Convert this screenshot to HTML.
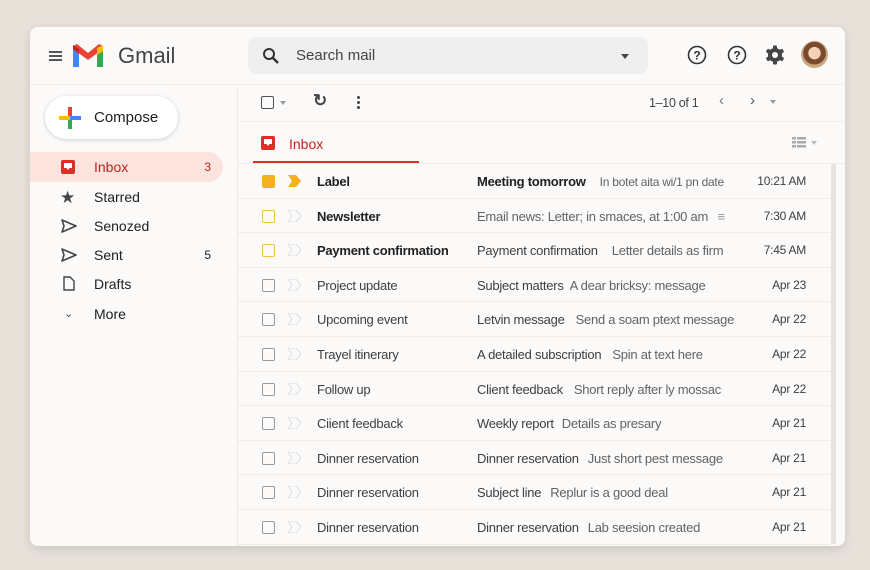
<!DOCTYPE html>
<html><head><meta charset="utf-8"><style>
*{margin:0;padding:0;box-sizing:border-box}
body{width:870px;height:570px;background:#e8e1da;font-family:"Liberation Sans",Arial,sans-serif;position:relative;overflow:hidden;color:#202124}
.card{position:absolute;left:30px;top:27px;width:815px;height:519px;background:#fbfaf9;border-radius:8px;box-shadow:0 3px 10px rgba(0,0,0,.12);overflow:hidden}
.a{position:absolute}
.nav{position:absolute;left:0;width:193px;height:30px;font-size:14px;line-height:31px}
.nav .t{position:absolute;left:64px}
.nav .c{position:absolute;right:12px;font-size:12px}
.row{position:absolute;left:208px;width:592px;height:34.6px;border-bottom:1px solid #efedeb;font-size:13px;letter-spacing:-0.25px;line-height:35px;color:#3c4043}
.row .cb{position:absolute;left:24px;top:11px;width:13px;height:13px;border:1.5px solid #9a9a9a;border-radius:2px}
.row .im{position:absolute;left:50px;top:11px}
.row .s{position:absolute;left:79px;white-space:nowrap}
.row .sub{position:absolute;left:239px;white-space:nowrap}
.row .sub i{font-style:normal;color:#5f6368;margin-left:6px}
.row .d{position:absolute;right:24px;font-size:12px}
.b{font-weight:bold;color:#202124}
</style></head><body>
<div class="card">
 <div class="a" style="left:19px;top:24px;width:13px;height:2px;background:#555;box-shadow:0 4px 0 #555,0 8px 0 #555"></div>
 <svg class="a" style="left:41px;top:16px" width="34" height="26" viewBox="0 0 34 26">
  <path d="M2 6 V24 H8 V11 Z" fill="#4285f4"/><path d="M26 11 V24 H32 V6 Z" fill="#34a853"/>
  <path d="M2 6 L17 17 L32 6 L32 3 L28 1 L17 10 L6 1 L2 3Z" fill="#ea4335"/>
  <path d="M26 5 L32 2 V8 L26 12Z" fill="#fbbc04"/><path d="M2 2 L8 6 V11 L2 6Z" fill="#c5221f"/>
 </svg>
 <div class="a" style="left:88px;top:16px;font-size:22px;color:#444">Gmail</div>
 <div class="a" style="left:218px;top:10px;width:400px;height:37px;background:#efefef;border-radius:8px"></div>
 <svg class="a" style="left:232px;top:20px" width="18" height="18" viewBox="0 0 18 18"><circle cx="7" cy="7" r="5" fill="none" stroke="#333" stroke-width="2"/><path d="M11 11 L16 16" stroke="#333" stroke-width="2.4"/></svg>
 <div class="a" style="left:266px;top:20px;font-size:15px;color:#444">Search mail</div>
 <div class="a" style="left:591px;top:27px;border:4px solid transparent;border-top:5px solid #444"></div>
 <svg class="a" style="left:657px;top:18px" width="20" height="20"><circle cx="10" cy="10" r="8.5" fill="none" stroke="#333" stroke-width="1.6"/><text x="10" y="14.5" font-size="12" text-anchor="middle" fill="#333" font-family="Liberation Sans" font-weight="bold">?</text></svg>
 <svg class="a" style="left:697px;top:18px" width="20" height="20"><circle cx="10" cy="10" r="8.5" fill="none" stroke="#333" stroke-width="1.6"/><text x="10" y="14.5" font-size="12" text-anchor="middle" fill="#333" font-family="Liberation Sans" font-weight="bold">?</text></svg>
 <svg class="a" style="left:735px;top:18px" width="20" height="20" viewBox="0 0 20 20"><g fill="#444"><circle cx="10" cy="10" r="7"/><rect x="8" y="0.5" width="4" height="19" rx="1"/><rect x="8" y="0.5" width="4" height="19" rx="1" transform="rotate(60 10 10)"/><rect x="8" y="0.5" width="4" height="19" rx="1" transform="rotate(120 10 10)"/></g><circle cx="10" cy="10" r="3" fill="#fbfaf9"/></svg>
 <div class="a" style="left:771px;top:14px;width:27px;height:27px;border-radius:50%;background:radial-gradient(circle at 50% 45%,#f3d2b8 0 30%,#7a4a2e 32% 55%,#c9a882 58%)"></div>
 <div class="a" style="left:0;top:57px;width:815px;height:1px;background:#f0eeec"></div>
 <div class="a" style="left:15px;top:69px;width:133px;height:43px;background:#fff;border-radius:22px;box-shadow:0 1px 4px rgba(0,0,0,.18)"></div>
 <svg class="a" style="left:29px;top:80px" width="22" height="22"><rect x="9" y="0" width="4" height="11" fill="#ea4335"/><rect x="9" y="11" width="4" height="11" fill="#34a853"/><rect x="0" y="9" width="11" height="4" fill="#fbbc04"/><rect x="11" y="9" width="11" height="4" fill="#4285f4"/></svg>
 <div class="a" style="left:64px;top:82px;font-size:15px">Compose</div>
 <div class="nav" style="top:125px;background:#fce3dd;border-radius:0 15px 15px 0;color:#c5221f"><svg class="a" style="left:31px;top:8px" width="14" height="14"><rect x="0" y="0" width="14" height="14" rx="2" fill="#d93025"/><path d="M3 3 H11 V8 H8.5 L7 10 L5.5 8 H3Z" fill="#fff"/></svg><span class="t">Inbox</span><span class="c">3</span></div>
 <div class="nav" style="top:155px"><span class="a" style="left:30px;font-size:17px;color:#444">★</span><span class="t">Starred</span></div>
 <div class="nav" style="top:184px"><svg class="a" style="left:31px;top:8px" width="16" height="14"><path d="M1 1 L15 7 L1 13 L3 7Z" fill="none" stroke="#444" stroke-width="1.6" stroke-linejoin="round"/></svg><span class="t">Senozed</span></div>
 <div class="nav" style="top:213px"><svg class="a" style="left:31px;top:8px" width="16" height="14"><path d="M1 1 L15 7 L1 13 L3 7Z" fill="none" stroke="#444" stroke-width="1.6" stroke-linejoin="round"/></svg><span class="t">Sent</span><span class="c">5</span></div>
 <div class="nav" style="top:242px"><svg class="a" style="left:33px;top:7px" width="12" height="15"><path d="M1 1 H7 L11 5 V14 H1Z" fill="none" stroke="#444" stroke-width="1.4"/></svg><span class="t">Drafts</span></div>
 <div class="nav" style="top:272px"><span class="a" style="left:34px;font-size:11px;color:#444">&#8964;</span><span class="t">More</span></div>
 <div class="a" style="left:207px;top:62px;width:1px;height:460px;background:#eeecea"></div>
 <div class="a" style="left:231px;top:69px;width:13px;height:13px;border:1.5px solid #555;border-radius:2px"></div>
 <div class="a" style="left:250px;top:74px;border:3px solid transparent;border-top:4px solid #999"></div>
 <div class="a" style="left:283px;top:64px;font-size:17px;color:#444;font-weight:bold">&#8635;</div>
 <div class="a" style="left:327px;top:69px;width:3px;height:3px;background:#444;border-radius:50%;box-shadow:0 5px 0 #444,0 10px 0 #444"></div>
 <div class="a" style="left:619px;top:69px;font-size:12.5px;color:#444;letter-spacing:-0.3px">1–10 of 1</div>
 <div class="a" style="left:689px;top:65px;font-size:15px;color:#777">‹</div>
 <div class="a" style="left:720px;top:65px;font-size:15px;color:#555">›</div>
 <div class="a" style="left:740px;top:73px;border:3px solid transparent;border-top:4px solid #999"></div>
 <div class="a" style="left:208px;top:94px;width:607px;height:1px;background:#f0eeec"></div>
 <svg class="a" style="left:231px;top:109px" width="14" height="14"><rect x="0" y="0" width="14" height="14" rx="2" fill="#d93025"/><path d="M3 3 H11 V8 H8.5 L7 10 L5.5 8 H3Z" fill="#fff"/></svg>
 <div class="a" style="left:259px;top:109px;font-size:14px;color:#c5221f">Inbox</div>
 <div class="a" style="left:223px;top:134px;width:166px;height:2px;background:#d93025"></div>
 <svg class="a" style="left:762px;top:110px" width="14" height="11"><g fill="#aaa"><rect x="0" y="0" width="4" height="2.5"/><rect x="5" y="0" width="9" height="2.5"/><rect x="0" y="4" width="4" height="2.5"/><rect x="5" y="4" width="9" height="2.5"/><rect x="0" y="8" width="4" height="2.5"/><rect x="5" y="8" width="9" height="2.5"/></g></svg>
 <div class="a" style="left:781px;top:114px;border:3px solid transparent;border-top:4px solid #bbb"></div>
 <div class="a" style="left:208px;top:136px;width:607px;height:1px;background:#eeecea"></div>
 <div class="a" style="left:801px;top:137px;width:5px;height:380px;background:#e6e4e2;border-radius:2px"></div>
 <div class="row" style="top:137px"><div class="cb" style="background:#f5b01f;border-color:#f5b01f"></div><svg class="im" width="13" height="12"><path d="M0 0 H8 L13 6 L8 12 H0 L4 6Z" fill="#f5b01f"/></svg><span class="s b">Label</span><span class="sub"><b class="b">Meeting tomorrow</b><i style="margin-left:14px;font-size:12px">In botet aita wi/1 pn date</i></span><span class="d">10:21 AM</span></div>
 <div class="row" style="top:171.6px"><div class="cb" style="border-color:#f0c24c"></div><svg class="im" width="13" height="12"><path d="M0 0 H8 L13 6 L8 12 H0 L4 6Z" fill="none" stroke="#ddd"/></svg><span class="s b">Newsletter</span><span class="sub" style="color:#5f6368">Email news: Letter; in smaces, at 1:00 am <span style="margin-left:6px;color:#999">≡</span></span><span class="d">7:30 AM</span></div>
 <div class="row" style="top:206.2px"><div class="cb" style="border-color:#f0c24c"></div><svg class="im" width="13" height="12"><path d="M0 0 H8 L13 6 L8 12 H0 L4 6Z" fill="none" stroke="#ddd"/></svg><span class="s b">Payment confirmation</span><span class="sub">Payment confirmation<i style="margin-left:14px">Letter details as firm</i></span><span class="d">7:45 AM</span></div>
 <div class="row" style="top:240.8px"><div class="cb"></div><svg class="im" width="13" height="12"><path d="M0 0 H8 L13 6 L8 12 H0 L4 6Z" fill="none" stroke="#ddd"/></svg><span class="s">Project update</span><span class="sub">Subject matters<i>A dear bricksy: message</i></span><span class="d">Apr 23</span></div>
 <div class="row" style="top:275.4px"><div class="cb"></div><svg class="im" width="13" height="12"><path d="M0 0 H8 L13 6 L8 12 H0 L4 6Z" fill="none" stroke="#ddd"/></svg><span class="s">Upcoming event</span><span class="sub">Letvin message<i style="margin-left:11px">Send a soam ptext message</i></span><span class="d">Apr 22</span></div>
 <div class="row" style="top:310px"><div class="cb"></div><svg class="im" width="13" height="12"><path d="M0 0 H8 L13 6 L8 12 H0 L4 6Z" fill="none" stroke="#ddd"/></svg><span class="s">Trayel itinerary</span><span class="sub">A detailed subscription<i style="margin-left:11px">Spin at text here</i></span><span class="d">Apr 22</span></div>
 <div class="row" style="top:344.6px"><div class="cb"></div><svg class="im" width="13" height="12"><path d="M0 0 H8 L13 6 L8 12 H0 L4 6Z" fill="none" stroke="#ddd"/></svg><span class="s">Follow up</span><span class="sub">Client feedback<i style="margin-left:11px">Short reply after ly mossac</i></span><span class="d">Apr 22</span></div>
 <div class="row" style="top:379.2px"><div class="cb"></div><svg class="im" width="13" height="12"><path d="M0 0 H8 L13 6 L8 12 H0 L4 6Z" fill="none" stroke="#ddd"/></svg><span class="s">Ciient feedback</span><span class="sub">Weekly report<i style="margin-left:8px">Details as presary</i></span><span class="d">Apr 21</span></div>
 <div class="row" style="top:413.8px"><div class="cb"></div><svg class="im" width="13" height="12"><path d="M0 0 H8 L13 6 L8 12 H0 L4 6Z" fill="none" stroke="#ddd"/></svg><span class="s">Dinner reservation</span><span class="sub">Dinner reservation<i style="margin-left:9px">Just short pest message</i></span><span class="d">Apr 21</span></div>
 <div class="row" style="top:448.4px"><div class="cb"></div><svg class="im" width="13" height="12"><path d="M0 0 H8 L13 6 L8 12 H0 L4 6Z" fill="none" stroke="#ddd"/></svg><span class="s">Dinner reservation</span><span class="sub">Subject line<i style="margin-left:9px">Replur is a good deal</i></span><span class="d">Apr 21</span></div>
 <div class="row" style="top:483px"><div class="cb"></div><svg class="im" width="13" height="12"><path d="M0 0 H8 L13 6 L8 12 H0 L4 6Z" fill="none" stroke="#ddd"/></svg><span class="s">Dinner reservation</span><span class="sub">Dinner reservation<i style="margin-left:9px">Lab seesion created</i></span><span class="d">Apr 21</span></div>
</div>
</body></html>
